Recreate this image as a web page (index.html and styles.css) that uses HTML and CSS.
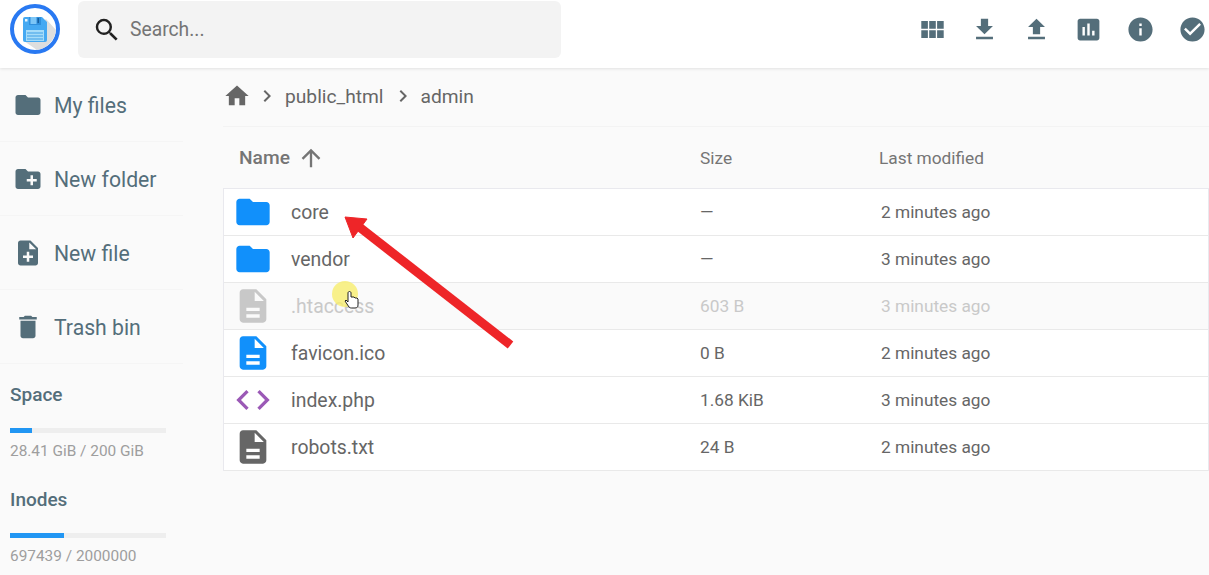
FILE: index.html
```html
<!DOCTYPE html>
<html lang="en">
<head>
    <meta charset="UTF-8">
    <meta name="viewport" content="width=device-width, initial-scale=1.0">
    <title>File Manager</title>
    <link rel="stylesheet" href="styles.css">
</head>
<body>

    <header class="topbar">
        <div class="logo">
            <svg viewBox="0 0 50 50" width="50" height="50">
                <circle cx="25" cy="25" r="23" fill="#fff" stroke="#2979f2" stroke-width="4"/>
                <path d="M14 37 L36 15 L46 26 A23 23 0 0 1 27 46 Z" fill="#dedede"/>
                <path d="M13 15 a2 2 0 0 1 2-2 H32 L37 18 V36 a2 2 0 0 1-2 2 H15 a2 2 0 0 1-2-2 Z" fill="#45a9f2"/>
                <rect x="19" y="13" width="12" height="8" fill="#2f8fdc"/>
                <rect x="20.500" y="13" width="6" height="7" fill="#7cc6f7"/>
                <rect x="27.500" y="14" width="1.500" height="5" fill="#155d9e"/>
                <rect x="15" y="15" width="2.500" height="2.500" fill="#e8f6ff"/>
                <rect x="16" y="26" width="18" height="11" fill="#a6dcf9"/>
                <path d="M17 29 H33 M17 32 H33 M17 35 H33" stroke="#3f9fe6" stroke-width="1"/>
            </svg>
        </div>
        <div class="search">
            <svg class="search-icon" viewBox="0 0 24 24" width="30" height="30"><path d="M15.500 14h-.79l-.28-.27A6.470 6.470 0 0 0 16 9.500 6.500 6.500 0 1 0 9.500 16c1.610 0 3.090-.59 4.230-1.570l.27.28v.79l5 4.990L20.490 19l-4.990-5zm-6 0C7.010 14 5 11.990 5 9.500S7.010 5 9.500 5 14 7.010 14 9.500 11.990 14 9.500 14z"/></svg>
            <span class="search-text">Search...</span>
        </div>
        <div class="actions">
            <svg viewBox="1.500 0.500 22 22"><path d="M4 11h5V5H4v6zm0 7h5v-6H4v6zm6 0h5v-6h-5v6zm6 0h5v-6h-5v6zm-6-7h5V5h-5v6zm6-6v6h5V5h-5z"/></svg>
            <svg viewBox="0 0 24 24"><path d="M19 9h-4V3H9v6H5l7 7 7-7zM5 18v2h14v-2H5z"/></svg>
            <svg viewBox="0 0 24 24"><path d="M9 16h6v-6h4l-7-7-7 7h4v6zm-4 2h14v2H5v-2z"/></svg>
            <svg viewBox="0 0 24 24"><path d="M19 3H5c-1.100 0-2 .9-2 2v14c0 1.100.9 2 2 2h14c1.100 0 2-.9 2-2V5c0-1.100-.9-2-2-2zM9 17H7v-7h2v7zm4 0h-2V7h2v10zm4 0h-2v-4h2v4z"/></svg>
            <svg viewBox="0 0 24 24"><path d="M12 2C6.480 2 2 6.480 2 12s4.480 10 10 10 10-4.480 10-10S17.520 2 12 2zm1 15h-2v-6h2v6zm0-8h-2V7h2v2z"/></svg>
            <svg viewBox="0 0 24 24"><path d="M12 2C6.480 2 2 6.480 2 12s4.480 10 10 10 10-4.480 10-10S17.520 2 12 2zm-2 15l-5-5 1.410-1.410L10 14.170l7.590-7.590L19 8l-9 9z"/></svg>
        </div>
    </header>

    <div class="layout">
        <aside class="sidebar">
            <div class="nav-item">
                <svg viewBox="0 0 24 24" width="30" height="30"><path d="M10 4H4c-1.100 0-2 .9-2 2v12c0 1.100.9 2 2 2h16c1.100 0 2-.9 2-2V8c0-1.100-.9-2-2-2h-8l-2-2z"/></svg>
                <span>My files</span>
            </div>
            <div class="nav-item">
                <svg viewBox="0 0 24 24" width="30" height="30"><path d="M20 6h-8l-2-2H4c-1.110 0-2 .89-2 2v12c0 1.110.89 2 2 2h16c1.110 0 2-.89 2-2V8c0-1.110-.89-2-2-2zm-1 8h-3v3h-2v-3h-3v-2h3V9h2v3h3v2z"/></svg>
                <span>New folder</span>
            </div>
            <div class="nav-item">
                <svg viewBox="0 0 24 24" width="30" height="30"><path d="M14 2H6c-1.100 0-2 .9-2 2v16c0 1.100.9 2 2 2h12c1.100 0 2-.9 2-2V8l-6-6zm2 14h-3v3h-2v-3H8v-2h3v-3h2v3h3v2zm-3-7V3.500L18.500 9H13z"/></svg>
                <span>New file</span>
            </div>
            <div class="nav-item">
                <svg viewBox="0 0 24 24" width="30" height="30"><path d="M6 19c0 1.100.9 2 2 2h8c1.100 0 2-.9 2-2V7H6v12zM19 4h-3.500l-1-1h-5l-1 1H5v2h14V4z"/></svg>
                <span>Trash bin</span>
            </div>
            <div class="usage usage-space">
                <div class="usage-title">Space</div>
                <div class="usage-bar"><div class="usage-fill" style="width: 14.2%"></div></div>
                <div class="usage-text">28.41 GiB / 200 GiB</div>
            </div>
            <div class="usage usage-inodes">
                <div class="usage-title">Inodes</div>
                <div class="usage-bar"><div class="usage-fill" style="width: 34.9%"></div></div>
                <div class="usage-text">697439 / 2000000</div>
            </div>
        </aside>

        <main class="content">
            <nav class="breadcrumb">
                <svg class="home" viewBox="0 0 24 24" width="28" height="28"><path d="M10 20v-6h4v6h5v-8h3L12 3 2 12h3v8z"/></svg>
                <svg class="chev" viewBox="0 0 24 24" width="24" height="24"><path d="M8.590 16.590L13.170 12 8.590 7.410 10 6l6 6-6 6z"/></svg>
                <span>public_html</span>
                <svg class="chev" viewBox="0 0 24 24" width="24" height="24"><path d="M8.590 16.590L13.170 12 8.590 7.410 10 6l6 6-6 6z"/></svg>
                <span>admin</span>
            </nav>

            <div class="thead">
                <div class="col-name th-name">Name
                    <svg viewBox="0 0 24 24" width="28" height="28"><path d="M4 12l1.410 1.410L11 7.830V20h2V7.830l5.580 5.590L20 12l-8-8-8 8z"/></svg>
                </div>
                <div class="col-size">Size</div>
                <div class="col-date th-date">Last modified</div>
            </div>

            <div class="tbody">
                <div class="row">
                    <div class="col-icon"><svg class="blue" viewBox="0 0 24 24" width="40" height="40"><path d="M10 4H4c-1.100 0-2 .9-2 2v12c0 1.100.9 2 2 2h16c1.100 0 2-.9 2-2V8c0-1.100-.9-2-2-2h-8l-2-2z"/></svg></div>
                    <div class="col-name">core</div>
                    <div class="col-size">—</div>
                    <div class="col-date">2 minutes ago</div>
                </div>
                <div class="row">
                    <div class="col-icon"><svg class="blue" viewBox="0 0 24 24" width="40" height="40"><path d="M10 4H4c-1.100 0-2 .9-2 2v12c0 1.100.9 2 2 2h16c1.100 0 2-.9 2-2V8c0-1.100-.9-2-2-2h-8l-2-2z"/></svg></div>
                    <div class="col-name">vendor</div>
                    <div class="col-size">—</div>
                    <div class="col-date">3 minutes ago</div>
                </div>
                <div class="row row-hidden">
                    <div class="col-icon"><svg class="grey" viewBox="0 0 24 24" width="40" height="40"><path d="M6 2c-1.100 0-2 .9-2 2v16c0 1.100.9 2 2 2h12c1.100 0 2-.9 2-2V8l-6-6H6zm7 7V3.500L18.500 9H13zM8 13h8v2H8v-2zm0 4h8v2H8v-2z" fill-rule="evenodd"/></svg></div>
                    <div class="col-name">.htaccess</div>
                    <div class="col-size">603 B</div>
                    <div class="col-date">3 minutes ago</div>
                </div>
                <div class="row">
                    <div class="col-icon"><svg class="blue" viewBox="0 0 24 24" width="40" height="40"><path d="M6 2c-1.100 0-2 .9-2 2v16c0 1.100.9 2 2 2h12c1.100 0 2-.9 2-2V8l-6-6H6zm7 7V3.500L18.500 9H13zM8 13h8v2H8v-2zm0 4h8v2H8v-2z" fill-rule="evenodd"/></svg></div>
                    <div class="col-name">favicon.ico</div>
                    <div class="col-size">0 B</div>
                    <div class="col-date">2 minutes ago</div>
                </div>
                <div class="row">
                    <div class="col-icon"><svg class="purple" viewBox="0 0 24 24" width="40" height="40"><path d="M9.400 16.600L4.800 12l4.600-4.600L8 6l-6 6 6 6 1.400-1.400zm5.200 0l4.600-4.600-4.600-4.600L16 6l6 6-6 6-1.400-1.400z"/></svg></div>
                    <div class="col-name">index.php</div>
                    <div class="col-size">1.68 KiB</div>
                    <div class="col-date">3 minutes ago</div>
                </div>
                <div class="row">
                    <div class="col-icon"><svg class="dark" viewBox="0 0 24 24" width="40" height="40"><path d="M6 2c-1.100 0-2 .9-2 2v16c0 1.100.9 2 2 2h12c1.100 0 2-.9 2-2V8l-6-6H6zm7 7V3.500L18.500 9H13zM8 13h8v2H8v-2zm0 4h8v2H8v-2z" fill-rule="evenodd"/></svg></div>
                    <div class="col-name">robots.txt</div>
                    <div class="col-size">24 B</div>
                    <div class="col-date">2 minutes ago</div>
                </div>
            </div>
        </main>
    </div>

    <!-- annotation drawn over the recording -->
    <svg class="overlay" viewBox="0 0 1209 575" width="1209" height="575">
        <circle cx="345" cy="294" r="13" fill="#f7ee6e" opacity="0.8"/>
        <path d="M358 226 L510.500 345" stroke="#ee2528" stroke-width="9" fill="none"/>
        <path d="M345 217 L367 219 L353 238 Z" fill="#ee2528" stroke="#ee2528" stroke-width="1"/>
        <path d="M348 293 v9 l-2-2 -1 1 4 6 c1 1 2 1 3 1 h3 c2 0 3-1 3-3 v-6 l-1-1 -1 0 -1 0 -1-1 -1 0 -2 0 v-4 c0-2-3-2-3 0z" fill="#fff" stroke="#222" stroke-width="1"/>
    </svg>

</body>
</html>
```

FILE: styles.css
```css
* { box-sizing: border-box; }
html, body { height: 100%; }
body { margin: 0; height: 575px; overflow: hidden; position: relative; background-color: #fafafa; font-family: Roboto, sans-serif; color: #666; }

.topbar { display: flex; align-items: center; height: 68px; background: #fff; box-shadow: 0 1px 3px rgba(0,0,0,0.1); padding-left: 10px; position: relative; }
.logo { width: 50px; height: 50px; margin-right: 18px; margin-top: -10px; flex: none; }
.search { display: flex; align-items: center; width: 483px; height: 57px; margin-top: -9px; background: #f3f3f3; border-radius: 6px; padding-left: 14px; }
.search-icon { fill: #212121; margin-right: 8px; }
.search-text { font-size: 19.300px; color: #757575; }
.actions { display: flex; margin-left: auto; gap: 23px; padding-right: 2.500px; margin-top: -9px; }
.actions svg { fill: #546e7a; width: 29px; height: 29px; }

.layout { display: flex; height: 507px; }

.sidebar { width: 183px; flex: none; }
.nav-item { display: flex; align-items: center; height: 74px; padding-left: 13px; padding-top: 1px; border-bottom: 1px solid #f5f5f5; font-size: 21.200px; color: #546e7a; }
.nav-item svg { fill: #546e7a; margin-right: 11px; flex: none; }

.usage { padding-left: 10px; width: 166px; }
.usage-space { margin-top: 20px; }
.usage-inodes { margin-top: 29px; }
.usage-title { font-size: 19px; font-weight: 500; line-height: 22px; color: #546e7a; }
.usage-bar { height: 5px; margin-top: 22px; background: #eeeeee; }
.usage-fill { height: 100%; background: #2196f3; }
.usage-text { font-size: 15.400px; line-height: 18px; margin-top: 9px; color: #9e9e9e; }

.content { flex: 1; padding-left: 40px; }
.breadcrumb { display: flex; align-items: center; height: 59px; padding-bottom: 2px; border-bottom: 1px solid #f3f3f3; font-size: 19.200px; color: #666; }
.breadcrumb svg { fill: #666; }
.breadcrumb .home { margin-right: -3px; }
.breadcrumb .chev { margin: 0 6px 0 7px; }

.thead { display: flex; align-items: center; height: 61px; font-size: 17.300px; color: #757575; }
.th-name { font-size: 19.200px; font-weight: 500; display: flex; align-items: center; gap: 7px; padding-left: 16px; width: 477px; }
.th-name svg { fill: #757575; }
.thead .col-date { margin-left: -2px; }

.tbody { background: #fff; border: 1px solid #e9e9ee; border-bottom: none; }
.row { display: flex; align-items: center; height: 47px; border-bottom: 1px solid #e9e9e9; font-size: 19.400px; color: #666; }
.col-icon { width: 67px; display: flex; padding-left: 9px; flex: none; }
.row .col-name { width: 409px; }
.col-size { width: 181px; flex: none; font-size: 17.300px; }
.col-date { font-size: 17.300px; }
.row-hidden { background: #fafafa; color: #c9c9c9; }
.blue { fill: #1190fb; }
.grey { fill: #c8c8c8; }
.dark { fill: #666; }
.purple { fill: #9b59b6; }

.overlay { position: absolute; top: 0; left: 0; pointer-events: none; }
```
